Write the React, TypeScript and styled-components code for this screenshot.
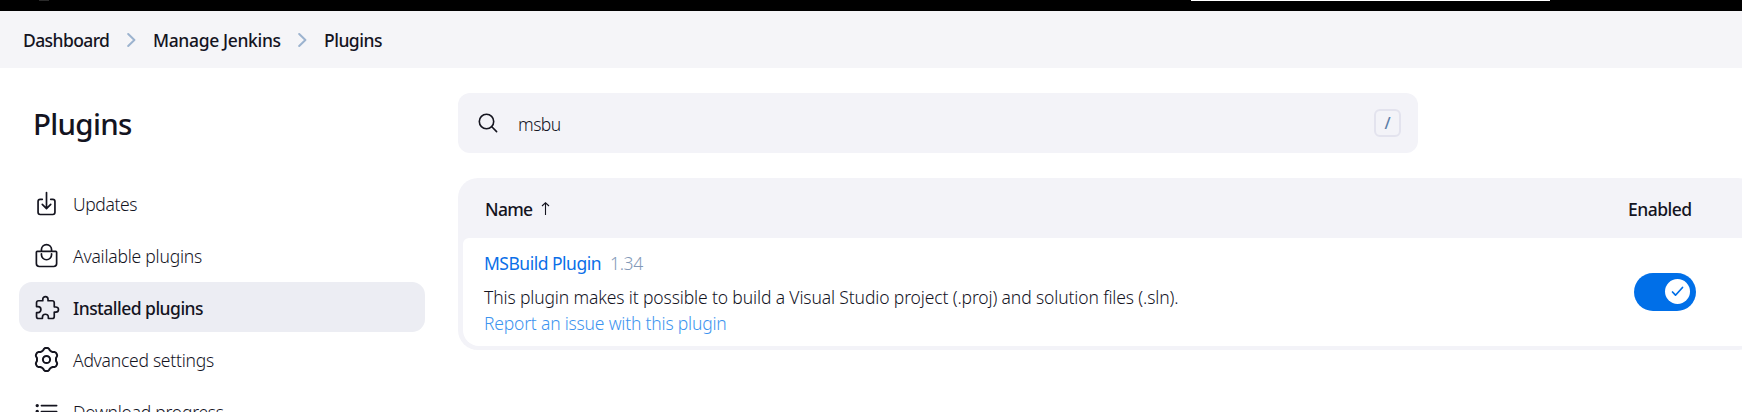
import React from "react";
import styled, { createGlobalStyle } from "styled-components";
import {
  IoDownloadOutline,
  IoBagHandleOutline,
  IoExtensionPuzzleOutline,
  IoListOutline,
} from "react-icons/io5";

const ink = "#14141f";
const surface = "#f3f3f8";

const GlobalStyle = createGlobalStyle`
  * { box-sizing: border-box; }
  html, body { margin: 0; background: #fff; overflow: hidden; }
  body { font-family: "Noto Sans", "Open Sans", sans-serif; font-size: 17.5px; color: ${ink}; }
`;

const Page = styled.div`
  height: 412px;
  overflow: hidden;
`;

const TopBar = styled.header`
  height: 11px;
  background: #000;
  display: flex;
  align-items: flex-start;
  padding: 0 192px 0 39px;
  justify-content: space-between;
`;
const LogoEdge = styled.div`
  width: 10px;
  height: 1px;
  background: #2a2a2a;
`;
const TopSearch = styled.div`
  width: 359px;
  height: 1px;
  background: #fff;
`;

const Text = styled.span<{ $track?: number }>`
  white-space: nowrap;
  letter-spacing: ${(p) => p.$track ?? 0}px;
`;

const Breadcrumbs = styled.nav`
  display: flex;
  align-items: center;
  height: 57px;
  padding-left: 23px;
  background: #f5f5f8;
`;
const Crumb = styled(Text)<{ $width: number }>`
  width: ${(p) => p.$width}px;
  font-weight: 500;
  line-height: 24px;
`;
const Chevron = styled.svg`
  width: 9px;
  height: 16px;
  margin-right: 17px;
  fill: none;
  stroke: #9cb3cf;
  stroke-width: 2;
  stroke-linecap: round;
  stroke-linejoin: round;
`;

const Layout = styled.div`
  display: grid;
  grid-template-columns: 458px 1fr;
`;

const Sidebar = styled.aside`
  padding: 33px 33px 0 19px;
`;
const Title = styled.h1`
  margin: 0 0 37px;
  padding-left: 14px;
  font-size: 29.5px;
  font-weight: 500;
  line-height: 46px;
  letter-spacing: -0.7px;
`;
const Tasks = styled.div`
  display: flex;
  flex-direction: column;
  gap: 2px;
  margin-top: -6px;
`;
const Task = styled.a<{ $active?: boolean }>`
  display: flex;
  align-items: center;
  flex: none;
  gap: 13px;
  height: 50px;
  padding: 1px 14px 0 14px;
  border-radius: 13px;
  background: ${(p) => (p.$active ? "#ecedf3" : "transparent")};
  font-weight: ${(p) => (p.$active ? 500 : 300)};
`;
const TaskIcon = styled.span<{ $shift?: number }>`
  flex: none;
  display: flex;
  width: 27px;
  height: 27px;
  color: ${ink};
  margin-left: ${(p) => p.$shift ?? 0}px;
  margin-right: ${(p) => -(p.$shift ?? 0)}px;
  svg {
    width: 27px;
    height: 27px;
  }
`;
const GearSvg = styled.svg`
  fill: none;
  stroke: currentColor;
  stroke-width: 2;
  stroke-linejoin: round;
`;

const Main = styled.main`
  padding-top: 25px;
  min-width: 0;
`;
const SearchBar = styled.div`
  display: flex;
  align-items: center;
  width: 960px;
  height: 60px;
  padding: 0 17px 0 20px;
  border-radius: 12px;
  background: ${surface};
`;
const SearchIcon = styled.svg`
  width: 20px;
  height: 20px;
  fill: none;
  stroke: ${ink};
  stroke-width: 1.6;
  stroke-linecap: round;
`;
const Query = styled(Text)`
  flex: 1;
  margin-left: 20px;
  padding-top: 2px;
  font-weight: 300;
`;
const Key = styled.kbd`
  display: flex;
  align-items: center;
  justify-content: center;
  width: 27px;
  height: 28px;
  border: 2px solid #e3e3ee;
  border-radius: 6px;
  color: #5d7fa8;
  font: 500 16px "Noto Sans", sans-serif;
`;

const Table = styled.section`
  width: 1300px;
  margin-top: 25px;
  padding: 0 0 4px 5px;
  border-radius: 20px;
  background: ${surface};
  overflow: hidden;
`;
const HeaderRow = styled.div`
  display: flex;
  align-items: center;
  height: 60px;
  padding: 1px 0 0 22px;
  font-weight: 500;
`;
const NameHead = styled.div`
  display: flex;
  align-items: center;
  width: 1143px;
  gap: 9px;
`;
const SortArrow = styled.svg`
  width: 9px;
  height: 13px;
  fill: none;
  stroke: ${ink};
  stroke-width: 1.1;
`;
const Row = styled.div`
  display: flex;
  height: 108px;
  padding: 12px 0 0 21px;
  border-radius: 6px 0 0 16px;
  background: #fff;
`;
const Details = styled.div`
  display: flex;
  flex-direction: column;
  width: 1150px;
  line-height: 26px;
  font-weight: 300;
`;
const PluginLine = styled.div`
  display: flex;
  gap: 9px;
  margin-bottom: 8px;
`;
const PluginLink = styled(Text)`
  color: #0b6fe8;
  font-weight: 400;
`;
const Version = styled(Text)`
  color: #8399b8;
`;
const IssueLink = styled(Text)`
  color: #3d94ef;
`;
const Toggle = styled.div`
  display: flex;
  align-items: center;
  justify-content: flex-end;
  width: 62px;
  height: 38px;
  margin-top: 23px;
  padding: 0 6px 1px;
  border-radius: 19px;
  background: #006fe8;
`;
const Knob = styled.div`
  display: flex;
  align-items: center;
  justify-content: center;
  width: 25px;
  height: 25px;
  border-radius: 50%;
  background: #fff;
`;
const Check = styled.svg`
  width: 13px;
  height: 11px;
  fill: none;
  stroke: #006fe8;
  stroke-width: 1.7;
  stroke-linecap: round;
  stroke-linejoin: round;
`;

const Separator = () => (
  <Chevron viewBox="0 0 9 16">
    <path d="M1.2 2 L7.4 8 L1.2 14" />
  </Chevron>
);

// Outline of a cog with six soft lobes, the first one pointing up.
const gearOutline =
  Array.from({ length: 120 }, (_, i) => {
    const a = (i / 120) * Math.PI * 2;
    const wave = Math.tanh(1.6 * Math.cos(6 * a)) / Math.tanh(1.6);
    const r = 10.55 + 1.05 * wave;
    const x = 13.5 + r * Math.sin(a);
    const y = 13.5 - r * Math.cos(a);
    return `${i ? "L" : "M"}${x.toFixed(2)} ${y.toFixed(2)}`;
  }).join("") + "Z";

const Gear = () => (
  <GearSvg viewBox="0 0 27 27">
    <circle cx="13.5" cy="13.5" r="3.6" />
    <path d={gearOutline} />
  </GearSvg>
);

const tasks = [
  { label: "Updates", track: -0.4, icon: <IoDownloadOutline /> },
  { label: "Available plugins", track: -0.22, icon: <IoBagHandleOutline /> },
  { label: "Installed plugins", track: -0.52, shift: 1, active: true, icon: <IoExtensionPuzzleOutline /> },
  { label: "Advanced settings", track: -0.25, icon: <Gear /> },
  { label: "Download progress", track: -0.25, icon: <IoListOutline /> },
];

export default function App() {
  return (
    <Page>
      <GlobalStyle />
      <TopBar>
        <LogoEdge />
        <TopSearch />
      </TopBar>
      <Breadcrumbs>
        <Crumb $width={104} $track={-0.6}>Dashboard</Crumb>
        <Separator />
        <Crumb $width={145} $track={-0.35}>Manage Jenkins</Crumb>
        <Separator />
        <Crumb $width={70} $track={-0.5}>Plugins</Crumb>
      </Breadcrumbs>
      <Layout>
        <Sidebar>
          <Title>Plugins</Title>
          <Tasks>
            {tasks.map((t) => (
              <Task key={t.label} $active={t.active}>
                <TaskIcon $shift={t.shift}>{t.icon}</TaskIcon>
                <Text $track={t.track}>{t.label}</Text>
              </Task>
            ))}
          </Tasks>
        </Sidebar>
        <Main>
          <SearchBar>
            <SearchIcon viewBox="0 0 20 20">
              <circle cx="8.5" cy="8.5" r="7.2" />
              <path d="M13.8 13.8L18.6 18.6" />
            </SearchIcon>
            <Query $track={-0.5}>msbu</Query>
            <Key>/</Key>
          </SearchBar>
          <Table>
            <HeaderRow>
              <NameHead>
                <Text $track={-0.7}>Name</Text>
                <SortArrow viewBox="0 0 9 13">
                  <path d="M4.5 13V1M1 4L4.500 .8L8 4" />
                </SortArrow>
              </NameHead>
              <Text $track={-0.5}>Enabled</Text>
            </HeaderRow>
            <Row>
              <Details>
                <PluginLine>
                  <PluginLink $track={-0.5}>MSBuild Plugin</PluginLink>
                  <Version $track={-0.35}>1.34</Version>
                </PluginLine>
                <Text $track={-0.13}>
                  This plugin makes it possible to build a Visual Studio project (.proj) and solution files (.sln).
                </Text>
                <IssueLink $track={-0.2}>Report an issue with this plugin</IssueLink>
              </Details>
              <Toggle>
                <Knob>
                  <Check viewBox="0 0 13 11">
                    <path d="M1.5 6L4.5 9.2L11.5 1.5" />
                  </Check>
                </Knob>
              </Toggle>
            </Row>
          </Table>
        </Main>
      </Layout>
    </Page>
  );
}
